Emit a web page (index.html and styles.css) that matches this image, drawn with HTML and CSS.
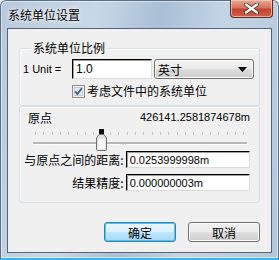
FILE: index.html
```html
<!DOCTYPE html>
<html lang="zh-CN">
<head>
    <meta charset="UTF-8">
    <title>系统单位设置</title>
    <link rel="stylesheet" href="styles.css">
</head>
<body>

    <!-- Dialog window -->
    <div class="window">

        <!-- Title bar -->
        <div class="titlebar">
            <span class="title">系统单位设置</span>
            <div class="close-btn">
                <svg width="17" height="11" viewBox="0 0 17 11">
                    <path d="M3 1.5 L14 9.5 M14 1.5 L3 9.5" stroke="#4a3a38" stroke-width="4" stroke-linecap="round"/>
                    <path d="M3 1.5 L14 9.5 M14 1.5 L3 9.5" stroke="#ffffff" stroke-width="2.2" stroke-linecap="round"/>
                </svg>
            </div>
        </div>

        <!-- Client area -->
        <div class="client">

            <fieldset class="group group-unit">
                <legend>系统单位比例</legend>
                <div class="unit-row">
                    <span class="unit-label">1 Unit =</span>
                    <div class="textbox unit-input">1.0</div>
                    <div class="combo">
                        <span>英寸</span>
                        <svg width="9" height="5" viewBox="0 0 9 5"><path d="M0 0 H9 L4.5 5 Z" fill="#000"/></svg>
                    </div>
                </div>
                <div class="check-row">
                    <span class="checkbox">
                        <svg width="13" height="13" viewBox="0 0 13 13">
                            <rect x="0.5" y="0.5" width="12" height="12" fill="#f4f4f4" stroke="#8f8f8f"/>
                            <rect x="2.5" y="2.5" width="8" height="8" fill="#e2e6ea" stroke="#c6ccd3"/>
                            <path d="M3.2 6.4 L5.4 9 L9.8 3.2" stroke="#3c5f8c" stroke-width="1.8" fill="none"/>
                        </svg>
                    </span>
                    <span class="check-label">考虑文件中的系统单位</span>
                </div>
            </fieldset>

            <div class="group group-origin">
                <div class="origin-row">
                    <span class="origin-label">原点</span>
                    <span class="origin-value">426141.2581874678m</span>
                </div>
                <div class="slider">
                    <div class="ticks"></div>
                    <div class="track"></div>
                    <div class="thumb">
                        <svg width="11" height="22" viewBox="0 0 11 22">
                            <rect x="3" y="0" width="5" height="5" fill="#111"/>
                            <path d="M3 5.5 H8 L10.5 9 V20.5 Q10.5 21.5 9.5 21.5 H1.5 Q0.5 21.5 0.5 20.5 V9 Z" fill="#e4e4e4" stroke="#707070"/>
                            <path d="M2 10 H9 V20 H2 Z" fill="#f4f4f4"/>
                        </svg>
                    </div>
                </div>
                <div class="field-row">
                    <span class="field-label">与原点之间的距离:</span>
                    <div class="textbox field-input">0.0253999998m</div>
                </div>
                <div class="field-row">
                    <span class="field-label">结果精度:</span>
                    <div class="textbox field-input">0.000000003m</div>
                </div>
            </div>

            <div class="buttons">
                <div class="btn btn-default">确定</div>
                <div class="btn">取消</div>
            </div>
        </div>
    </div>

</body>
</html>
```

FILE: styles.css
```css
body {
    margin: 0;
    padding: 0;
    background: #ffffff;
    font-family: "Liberation Sans", "Noto Sans CJK SC", sans-serif;
    font-size: 11px;
    color: #000;
}

.window {
    width: 279px;
    height: 260px;
    box-sizing: border-box;
    border: 1px solid #5a6f84;
    border-radius: 6px 6px 0 0;
    background: linear-gradient(100deg, #b6c9dc 0%, #c9d8e7 30%, #a9bfd5 50%, #c3d4e5 70%, #b3c7da 100%);
    box-shadow: inset 0 0 0 1px rgba(255, 255, 255, 0.5);
    display: flex;
    flex-direction: column;
    padding: 0 6px 5px 6px;
    border-bottom: 2px solid #38b6e8;
}

.titlebar {
    height: 27px;
    display: flex;
    justify-content: space-between;
    align-items: flex-start;
}

.title {
    margin-top: 6px;
    margin-left: 1px;
    font-family: "Noto Sans CJK SC", sans-serif;
    font-size: 12px;
    line-height: 16px;
    text-shadow: 0 0 6px #ffffff, 0 0 3px #ffffff;
}

.close-btn {
    width: 43px;
    height: 18px;
    margin-top: -1px;
    margin-right: -1px;
    box-sizing: border-box;
    border: 1px solid #5e2a22;
    border-top: none;
    border-radius: 0 0 4px 4px;
    background: linear-gradient(to bottom, #e8a893 0%, #d5735f 45%, #c0452f 55%, #d0604a 100%);
    box-shadow: inset 0 0 0 1px rgba(255, 220, 200, 0.6);
    display: flex;
    align-items: center;
    justify-content: center;
}

.client {
    flex: 1;
    background: #f0f0f0;
    border: 1px solid #53667a;
    display: flex;
    flex-direction: column;
    padding: 0 11px;
}

.group {
    border: 1px solid #d5dfe5;
    border-radius: 3px;
    box-shadow: inset 1px 1px 0 #ffffff;
    margin: 0;
    box-sizing: border-box;
}

.group-unit {
    margin-top: 12px;
    height: 65px;
    padding: 4px 0 0 3px;
}

.group-unit legend {
    font-family: "Noto Sans CJK SC", sans-serif;
    font-size: 12px;
    padding: 0 2px;
    margin-left: 8px;
    line-height: 14px;
}

.unit-row {
    display: flex;
    align-items: center;
    height: 20px;
}

.unit-label {
    width: 49px;
}

.textbox {
    box-sizing: border-box;
    background: #ffffff;
    border-top: 1px solid #000000;
    border-left: 1px solid #000000;
    border-right: 1px solid #dcdcdc;
    border-bottom: 1px solid #dcdcdc;
    box-shadow: inset 1px 1px 0 #a0a0a0;
    padding-left: 3px;
    display: flex;
    align-items: center;
}

.unit-input {
    width: 80px;
    height: 20px;
    font-size: 12px;
}

.combo {
    box-sizing: border-box;
    width: 100px;
    height: 20px;
    margin-left: 2px;
    border: 1px solid #707070;
    border-radius: 3px;
    background: linear-gradient(to bottom, #f2f2f2 0%, #ebebeb 50%, #dddddd 51%, #cfcfcf 100%);
    box-shadow: inset 0 0 0 1px #fcfcfc;
    display: flex;
    align-items: center;
    justify-content: space-between;
    padding: 0 6px 0 3px;
    font-family: "Noto Sans CJK SC", sans-serif;
    font-size: 12px;
}

.check-row {
    display: flex;
    align-items: center;
    margin-top: 5px;
    padding-left: 49px;
}

.checkbox {
    display: flex;
    margin-right: 2px;
}

.check-label {
    font-family: "Noto Sans CJK SC", sans-serif;
    font-size: 12px;
    line-height: 14px;
}

.group-origin {
    height: 97px;
    padding: 2px 9px 0 2px;
}

.origin-row {
    display: flex;
    justify-content: space-between;
    align-items: center;
    height: 16px;
    padding-left: 6px;
}

.origin-label {
    font-family: "Noto Sans CJK SC", sans-serif;
    font-size: 12px;
}

.origin-value {
    font-size: 11px;
}

.slider {
    position: relative;
    height: 26px;
    margin: 0 3px 0 11px;
}

.ticks {
    position: absolute;
    left: 2px;
    right: 2px;
    top: 7px;
    height: 3px;
    background: repeating-linear-gradient(to right, #c4c4c4 0, #c4c4c4 1px, transparent 1px, transparent 8.33px);
}

.track {
    position: absolute;
    left: 0;
    right: 0;
    top: 17px;
    height: 2px;
    background: #b8b8b8;
    border-bottom: 1px solid #ffffff;
}

.thumb {
    position: absolute;
    left: 63px;
    top: 4px;
    display: flex;
}

.field-row {
    display: flex;
    align-items: center;
    height: 17px;
    margin-bottom: 6px;
}

.field-label {
    width: 103px;
    text-align: right;
    font-family: "Noto Sans CJK SC", sans-serif;
    font-size: 12px;
}

.field-input {
    width: 126px;
    height: 17px;
    margin-left: 2px;
    font-size: 11px;
}

.buttons {
    display: flex;
    justify-content: flex-end;
    gap: 12px;
    margin-top: 19px;
    padding-right: 0;
}

.btn {
    box-sizing: border-box;
    width: 72px;
    height: 20px;
    border: 1px solid #707070;
    border-radius: 3px;
    background: linear-gradient(to bottom, #f2f2f2 0%, #ebebeb 50%, #dddddd 51%, #cfcfcf 100%);
    box-shadow: inset 0 0 0 1px #fcfcfc;
    display: flex;
    align-items: center;
    justify-content: center;
    font-family: "Noto Sans CJK SC", sans-serif;
    font-size: 12px;
}

.btn-default {
    border-color: #3c7fb1;
    background: linear-gradient(to bottom, #eaf6fd 0%, #d9f0fc 50%, #bee6fd 51%, #a7d9f5 100%);
    box-shadow: inset 0 0 0 1px #48c8f8;
}
```
